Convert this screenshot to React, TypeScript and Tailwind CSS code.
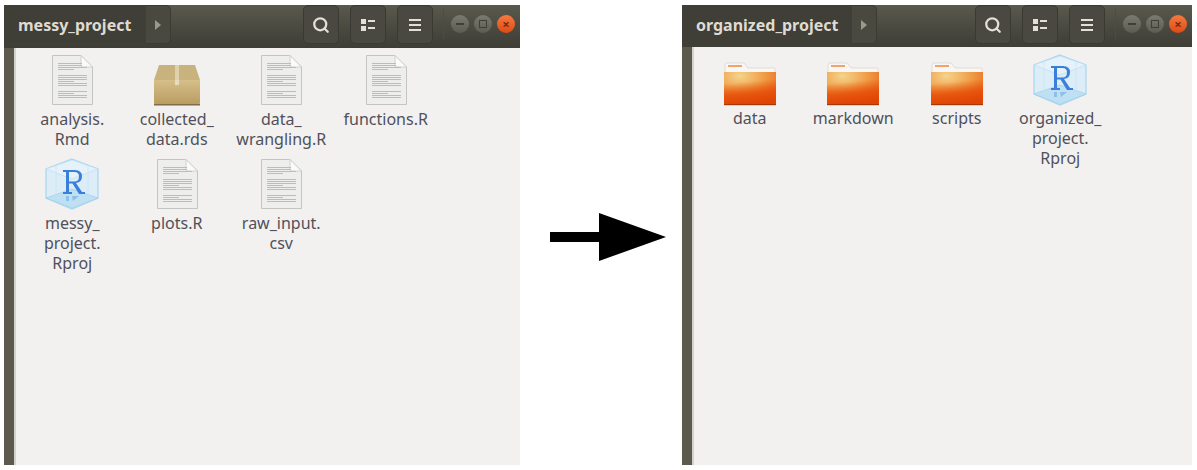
import React from "react";
import { Search } from "lucide-react";

type FileItem = {
  kind: "doc" | "box" | "folder" | "rproj";
  lines: string[];
};

type WindowProps = {
  title: string;
  items: FileItem[];
  widthClass: string;
  pathClass: string;
  barClass: string;
  columnClass: string;
  pad: string;
  labelClass: string;
};

function DocIcon() {
  const rows = [9, 11, 13, 15, 21, 23, 25, 27, 29, 31, 37, 39, 41, 43];
  return (
    <svg width="56" height="52" viewBox="0 0 56 52" className="blur-[0.4px]">
      <path d="M8.5 1.5H37L48.5 13V50.5H8.5Z" fill="#eeeeec" stroke="#c4c4c1" />
      <path d="M37 1.5L48.5 13H39Q37 13 37 11Z" fill="#fbfbfa" stroke="#d0d0cd" />
      {rows.map((y, i) => (
        <rect key={y} x="14" y={y} width={i % 4 === 3 ? 16 : i < 2 ? 24 : 29} height="1" fill="#bcbcba" />
      ))}
    </svg>
  );
}

function BoxIcon() {
  return (
    <svg width="56" height="52" viewBox="0 0 56 52" className="blur-[0.4px]">
      <defs>
        <linearGradient id="box-front" x1="0" y1="0" x2="0" y2="1">
          <stop offset="0" stopColor="#d6bf8a" />
          <stop offset="1" stopColor="#b89b60" />
        </linearGradient>
      </defs>
      <path d="M10 11H46L51 26H5Z" fill="#c8b27e" />
      <path d="M5 26H51V49Q51 51 49 51H7Q5 51 5 49Z" fill="url(#box-front)" />
      <rect x="26" y="11" width="4" height="15" fill="#dfd1ac" />
      <rect x="26" y="26" width="4" height="5" fill="#e6dcc0" />
      <rect x="5" y="50" width="46" height="1.5" fill="#7f6d48" />
    </svg>
  );
}

function FolderIcon({ id }: { id: string }) {
  return (
    <svg width="56" height="52" viewBox="0 0 56 52" className="blur-[0.4px]">
      <defs>
        <radialGradient id={id} cx="0.3" cy="0.12" r="1">
          <stop offset="0" stopColor="#f4d48c" />
          <stop offset="0.45" stopColor="#f0a04a" />
          <stop offset="1" stopColor="#e75a12" />
        </radialGradient>
        <linearGradient id={`${id}-shade`} x1="0" y1="0" x2="0.15" y2="1">
          <stop offset="0.35" stopColor="#e64e08" stopOpacity="0" />
          <stop offset="0.7" stopColor="#e64e08" stopOpacity="0.85" />
          <stop offset="1" stopColor="#e04404" />
        </linearGradient>
      </defs>
      <path d="M3 11Q3 9 5 9H22L26 14H52Q53 14 53 15V22H3Z" fill="#f8f7f5" stroke="#d5d3cf" strokeWidth="0.7" />
      <rect x="6" y="11" width="14" height="2" fill="#f2a36c" />
      <path d="M2 18H54V49Q54 51 52 51H4Q2 51 2 49Z" fill={`url(#${id})`} />
      <path d="M2 18H54V49Q54 51 52 51H4Q2 51 2 49Z" fill={`url(#${id}-shade)`} />
      <rect x="2" y="50" width="52" height="1.2" fill="#a83806" />
    </svg>
  );
}

function RprojIcon() {
  return (
    <svg width="56" height="52" viewBox="0 0 56 52" className="blur-[0.4px]">
      <path d="M28 1L54 11V40L28 51L2 40V11Z" fill="#dcedf8" stroke="#a8d6ee" strokeWidth="1.2" />
      <path d="M2 11L28 2L54 11L28 21Z" fill="#e6f2fa" stroke="#bfe0f1" strokeWidth="0.8" />
      <path d="M2 40L28 31L54 40L28 50Z" fill="#bfe0f3" stroke="#a0d2ec" strokeWidth="0.8" />
      <path d="M12 8V37M44 8V37" stroke="#c9e4f3" strokeWidth="0.8" />
      <path
        d="M19 12H31Q38 12 38 18.5Q38 24 32 25L38 34H41V36H35L28.5 25.5H25V34H28V36H19V34H22V14H19ZM25 14V23.5H30.5Q35 23.5 35 18.5Q35 14 30.5 14Z"
        fill="#3a7fdc"
      />
      <path d="M22 38H25V43H22ZM28 38L35 38L29 43Z" fill="#6da9e6" opacity="0.6" />
    </svg>
  );
}

function FileIcon({ kind, id }: { kind: FileItem["kind"]; id: string }) {
  if (kind === "doc") return <DocIcon />;
  if (kind === "box") return <BoxIcon />;
  if (kind === "folder") return <FolderIcon id={id} />;
  return <RprojIcon />;
}

function ToolButton({ children }: { children: React.ReactNode }) {
  return (
    <div className="flex h-[39px] w-9 items-center justify-center rounded-[5px] border border-[#3a3932] bg-[#4a4941] text-[#e4e0d7]">
      {children}
    </div>
  );
}

function FileWindow({ title, items, widthClass, pathClass, barClass, columnClass, pad, labelClass }: WindowProps) {
  return (
    <div className={`flex h-[460px] shrink-0 flex-col ${widthClass}`}>
      <div className={`flex items-start bg-gradient-to-b from-[#5a594d] to-[#3e3d36] ${barClass}`}>
        <div className={`flex h-[39px] items-center rounded-bl-[4px] bg-[#3f3e37] pl-[14px] text-[16px] font-bold text-[#dfdbd2] ${pathClass}`}>
          {title}
        </div>
        <div className="flex h-[39px] w-[25px] items-center justify-center rounded-r-[5px] border border-l-0 border-[#3b3a33] bg-[#4a4940]">
          <div className="h-0 w-0 border-y-[5px] border-l-[6px] border-y-transparent border-l-[#9a998e]" />
        </div>
        <div className="ml-auto flex items-start gap-[11px]">
          <ToolButton>
            <Search size={18} strokeWidth={3} />
          </ToolButton>
          <ToolButton>
            <svg width="16" height="14" viewBox="0 0 16 14" fill="currentColor">
              <rect x="1" y="1" width="5" height="5" />
              <rect x="1" y="8" width="5" height="5" />
              <rect x="8" y="2" width="7" height="2" />
              <rect x="8" y="9" width="7" height="2" />
            </svg>
          </ToolButton>
          <ToolButton>
            <svg width="12" height="12" viewBox="0 0 12 12" fill="currentColor">
              <rect y="0" width="12" height="2" />
              <rect y="5" width="12" height="2" />
              <rect y="10" width="12" height="2" />
            </svg>
          </ToolButton>
        </div>
        <div className="ml-[10px] mr-[7px] mt-1 h-[30px] w-px bg-[#4d4c43]" />
        <div className="mt-[10px] mr-[5px] flex gap-[5px]">
          <div className="flex size-[18px] items-center justify-center rounded-full bg-gradient-to-b from-[#7b7a70] to-[#5d5c53]">
            <div className="h-[2px] w-2 bg-[#3f3e37]" />
          </div>
          <div className="flex size-[18px] items-center justify-center rounded-full bg-gradient-to-b from-[#7b7a70] to-[#5d5c53]">
            <div className="size-2 border-[1.5px] border-[#3f3e37]" />
          </div>
          <div className="flex size-[18px] items-center justify-center rounded-full bg-gradient-to-b from-[#f5793f] to-[#dd4a12] text-[13px] font-bold leading-none text-[#7a2a08]">
            ×
          </div>
        </div>
      </div>
      <div className="flex min-h-0 flex-1">
        <div className="w-[10px] bg-[#5b5a4c]" />
        <div className="w-[2px] bg-[#d3d2cf]" />
        <div className={`grid flex-1 content-start gap-y-[9px] bg-[#f2f1f0] ${columnClass} ${pad}`}>
          {items.map((item, index) => (
            <div key={index} className="flex flex-col items-center">
              <FileIcon kind={item.kind} id={`folder-${title}-${index}`} />
              <div className={`text-center text-[16px] leading-5 text-[#50505a] ${labelClass}`}>
                {item.lines.map((line) => (
                  <div key={line} className="whitespace-nowrap">
                    {line}
                  </div>
                ))}
              </div>
            </div>
          ))}
        </div>
      </div>
    </div>
  );
}

const messyItems: FileItem[] = [
  { kind: "doc", lines: ["analysis.", "Rmd"] },
  { kind: "box", lines: ["collected_", "data.rds"] },
  { kind: "doc", lines: ["data_", "wrangling.R"] },
  { kind: "doc", lines: ["functions.R"] },
  { kind: "rproj", lines: ["messy_", "project.", "Rproj"] },
  { kind: "doc", lines: ["plots.R"] },
  { kind: "doc", lines: ["raw_input.", "csv"] },
];

const organizedItems: FileItem[] = [
  { kind: "folder", lines: ["data"] },
  { kind: "folder", lines: ["markdown"] },
  { kind: "folder", lines: ["scripts"] },
  { kind: "rproj", lines: ["organized_", "project.", "Rproj"] },
];

export default function App() {
  return (
    <div className="flex h-[470px] w-[1197px] items-start overflow-hidden bg-white pl-1 pt-[5px] font-['Noto_Sans',sans-serif]">
      <FileWindow
        title="messy_project"
        items={messyItems}
        widthClass="w-[516px]"
        pathClass="w-[142px]"
        barClass="h-[43px]"
        columnClass="grid-cols-[repeat(4,104.5px)]"
        pad="pl-[4px] pt-[6px]"
        labelClass="mt-[3px]"
      />
      <div className="flex h-[460px] w-[162px] shrink-0 items-center justify-center pl-[14px]">
        <svg width="118" height="50" viewBox="0 0 118 50" className="mt-[3px]">
          <path d="M1 20H50V1L117 25L50 49V30H1Z" fill="#000" />
        </svg>
      </div>
      <FileWindow
        title="organized_project"
        items={organizedItems}
        widthClass="w-[510px]"
        pathClass="w-[170px]"
        barClass="h-[42px]"
        columnClass="grid-cols-[repeat(4,103.5px)]"
        pad="pl-[4px] pt-[7px]"
        labelClass="mt-[2px]"
      />
    </div>
  );
}
